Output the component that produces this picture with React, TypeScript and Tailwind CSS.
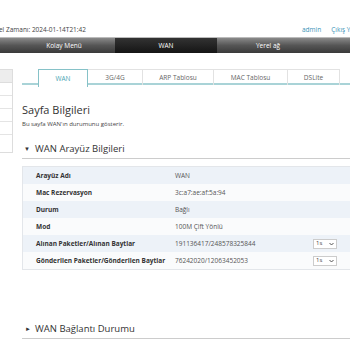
export default function App() {
  const tabs = [
    { label: "WAN", w: "w-[50px]", active: true },
    { label: "3G/4G", w: "w-[55px]" },
    { label: "ARP Tablosu", w: "w-[71px]" },
    { label: "MAC Tablosu", w: "w-[74px]" },
    { label: "DSLite", w: "w-[52px]" },
  ];
  const rows: { k: string; v: string; sel?: boolean }[] = [
    { k: "Arayüz Adı", v: "WAN" },
    { k: "Mac Rezervasyon", v: "3c:a7:ae:af:5a:94" },
    { k: "Durum", v: "Bağlı" },
    { k: "Mod", v: "100M Çift Yönlü" },
    { k: "Alınan Paketler/Alınan Baytlar", v: "191136417/248578325844", sel: true },
    { k: "Gönderilen Paketler/Gönderilen Baytlar", v: "76242020/12063452053", sel: true },
  ];
  return (
    <div className="w-[350px] h-[350px] overflow-hidden bg-white font-['Open_Sans',sans-serif] text-[#333]">
      <div className="w-[540px] ml-[-90px]">
        {/* header */}
        <div className="h-[37px] flex items-end pb-[3px] text-[6.5px] leading-[9px]">
          <span className="ml-[79px] w-[313px] text-[#444]">Yerel Zamanı: 2024-01-14T21:42</span>
          <span className="text-[#3a93b8]">admin</span>
          <span className="ml-[10px] text-[#3a93b8]">Çıkış Yap</span>
        </div>
        {/* nav */}
        <div className="h-[16px] flex bg-gradient-to-b from-[#8a8a8a] via-[#555] to-[#3a3a3a] text-white text-[6.5px] border-t border-[#bbb]">
          <div className="w-[103px]" />
          <div className="w-[102px] flex items-center justify-center">Kolay Menü</div>
          <div className="w-[102px] flex items-center justify-center bg-gradient-to-b from-[#333] to-[#151515]">WAN</div>
          <div className="w-[102px] flex items-center justify-center">Yerel ağ</div>
          <div className="w-[102px]" />
        </div>
        <div className="flex mt-[16px]">
          {/* sidebar */}
          <div className="w-[103px] shrink-0 border border-[#ddd] h-[84px] flex flex-col">
            <div className="h-[13px] bg-[#ededed] border-b border-[#ddd]" />
            <div className="h-[13px] border-b border-[#e4e4e4]" />
            <div className="h-[13px] border-b border-[#e4e4e4]" />
            <div className="h-[13px] border-b border-[#e4e4e4]" />
            <div className="h-[13px] border-b border-[#e4e4e4]" />
            <div className="h-[13px]" />
          </div>
          {/* content */}
          <div className="flex-1 pl-[9px]">
            <div className="flex pl-[16px] border-b-2 border-[#a9d3d7] h-[16px]">
              {tabs.map((t) => (
                <div
                  key={t.label}
                  className={
                    t.active
                      ? `${t.w} border border-b-0 border-[#86c2c8] bg-white mb-[-2px] h-[18px] flex items-center justify-center text-[6.5px] text-[#4aa5b3]`
                      : `${t.w} h-[16px] border-t border-r border-[#e2e2e2] flex items-center justify-center text-[6.5px] text-[#666]`
                  }
                >
                  {t.label}
                </div>
              ))}
            </div>
            <div className="mt-[18px] text-[11px] leading-[14px] text-[#333]">Sayfa Bilgileri</div>
            <div className="mt-[3px] text-[6px] leading-[9px] text-[#444]">Bu sayfa WAN'ın durumunu gösterir.</div>
            <div className="mt-[13px] flex items-center h-[13px] pb-[3px] border-b border-[#ccc] box-content text-[9.5px] leading-[12px] text-[#333]">
              <span className="ml-[2px] w-[11px] text-[6px]">▼</span>
              <span>WAN Arayüz Bilgileri</span>
            </div>
            <div className="mt-[7px] border border-[#e3e6ea]">
              {rows.map((r, i) => (
                <div key={r.k} className={`h-[17px] flex items-center text-[6.5px] ${i % 2 === 0 ? "bg-[#edf2f8]" : "bg-[#fafbfc]"}`}>
                  <span className="w-[152px] pl-[13px] font-bold text-[#333]">{r.k}</span>
                  <span className="w-[138px] text-[#555]">{r.v}</span>
                  {r.sel && (
                    <span className="w-[24px] h-[10px] border border-[#ccc] bg-white flex items-center justify-between px-[2px] text-[6px] text-[#444]">
                      <span>1s</span>
                      <svg width="5" height="4" viewBox="0 0 5 4"><path d="M0.5 1 L2.5 3 L4.5 1" fill="none" stroke="#444" strokeWidth="0.9" /></svg>
                    </span>
                  )}
                </div>
              ))}
            </div>
            <div className="mt-[52px] flex items-center h-[13px] pb-[3px] border-b border-[#ccc] box-content text-[9.5px] leading-[12px] text-[#333]">
              <span className="ml-[3px] w-[10px] text-[6px]">►</span>
              <span>WAN Bağlantı Durumu</span>
            </div>
          </div>
        </div>
      </div>
    </div>
  );
}
